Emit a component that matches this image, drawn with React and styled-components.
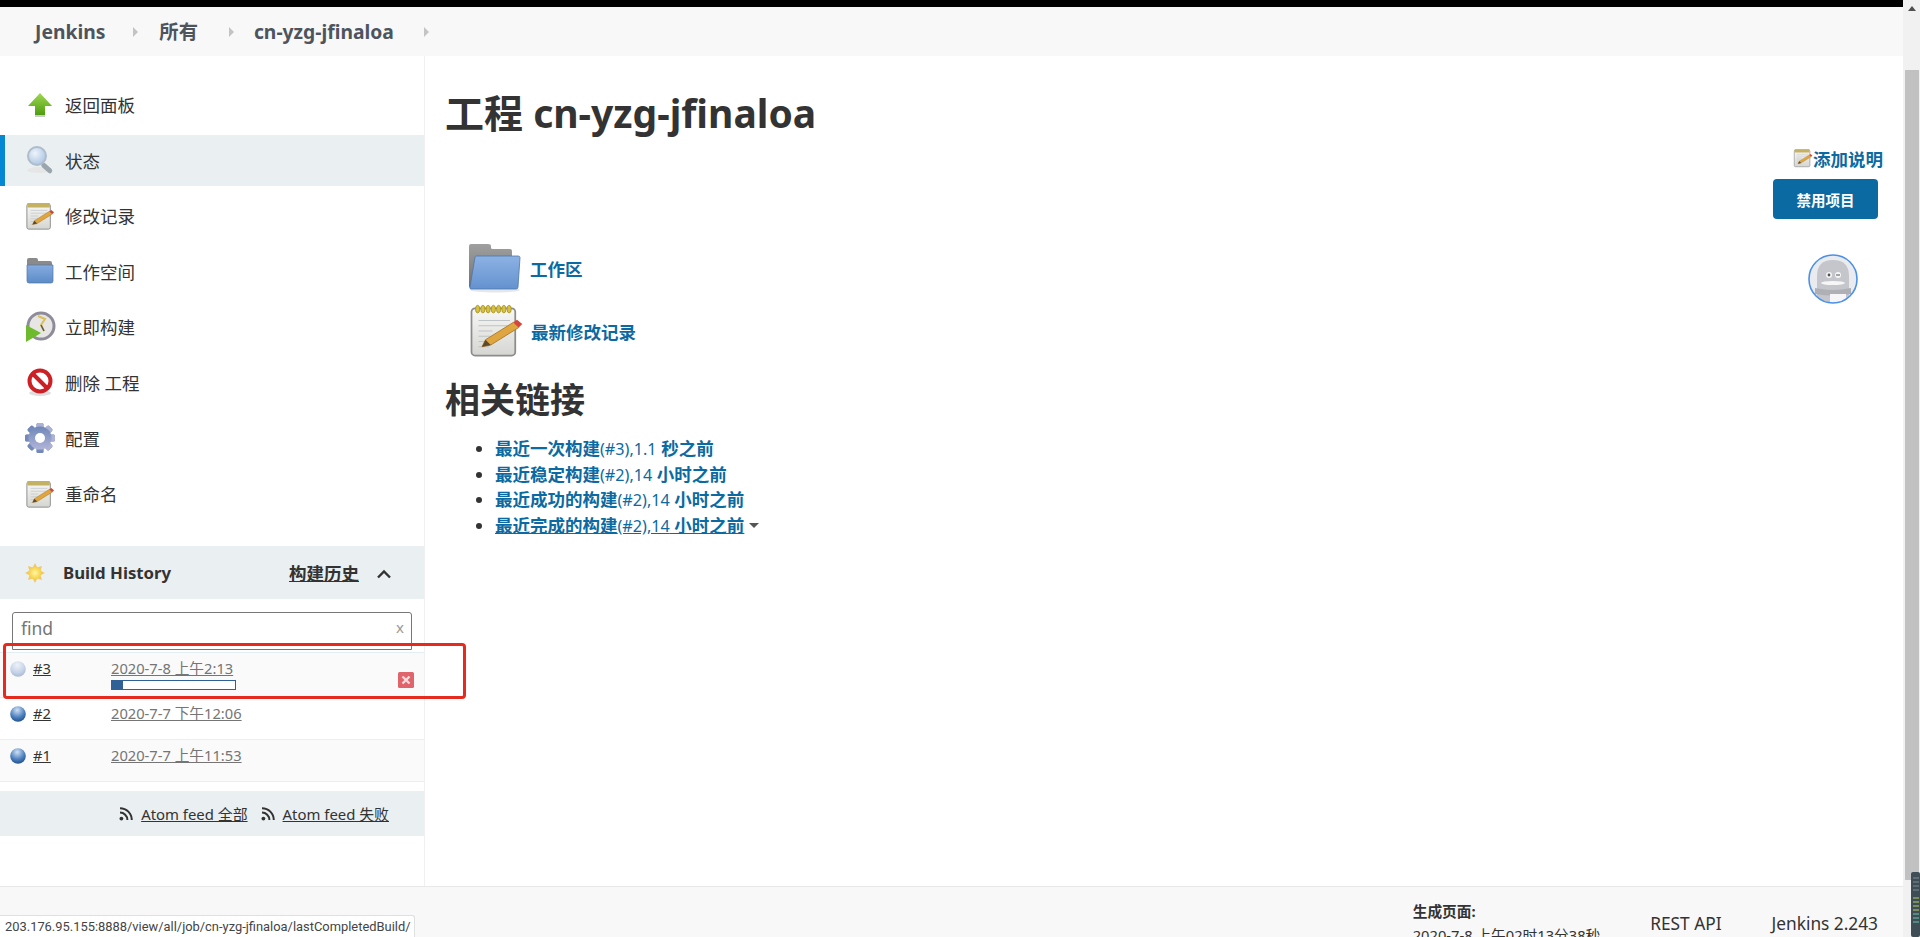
import React from 'react'
import styled, {createGlobalStyle} from 'styled-components'

const FONT = `"Noto Sans", "Noto Sans CJK SC", sans-serif`

const GlobalStyle = createGlobalStyle`
  html, body {
    margin: 0;
    height: 937px;
    overflow: hidden;
    background: #fff;
  }
  body {
    font-family: ${FONT};
    color: #333;
  }
`

const Screen = styled.div`
  position: relative;
  display: flex;
  width: 1920px;
  height: 937px;
  overflow: hidden;
`

const Page = styled.div`
  display: flex;
  flex-direction: column;
  width: 1903px;
  height: 937px;
`

const BlackBar = styled.div`
  flex: none;
  height: 7px;
  background: #000;
`

const Breadcrumbs = styled.nav`
  flex: none;
  display: flex;
  align-items: center;
  height: 49px;
  padding-left: 35px;
  background: #f8f8f8;
  font-size: 19.3px;
  font-weight: 700;
  color: #4d545d;
`

const Crumb = styled.span`
  line-height: 1;
  white-space: nowrap;
`

const CrumbArrow = styled.span`
  width: 0;
  height: 0;
  margin: 0 ${p => p.$right}px 0 ${p => p.$left}px;
  border-left: 5px solid #c4c4c4;
  border-top: 5px solid transparent;
  border-bottom: 5px solid transparent;
`

const Middle = styled.div`
  flex: none;
  display: flex;
  height: 830px;
`

const Sidebar = styled.aside`
  flex: none;
  width: 424px;
  padding-top: 23px;
  border-right: 1px solid #f0f0f0;
`

const Tasks = styled.ul`
  display: flex;
  flex-direction: column;
  gap: 4.6px;
  margin: 0 0 27px;
  padding: 0;
  list-style: none;
`

const Task = styled.li`
  display: flex;
  align-items: center;
  gap: 9px;
  height: 51px;
  padding-left: 24px;
  font-size: 17.5px;
  color: #333;
  background: ${p => (p.$active ? '#eaeff2' : 'transparent')};
  box-shadow: ${p => (p.$active ? 'inset 5px 0 0 #0587d4' : 'none')};
`

const TaskIcon = styled.span`
  display: flex;
  justify-content: center;
  align-items: center;
  width: 32px;
  height: 32px;
`

const PanelHead = styled.div`
  display: flex;
  align-items: center;
  height: 53px;
  padding-left: 25px;
  background: #eaeff2;
`

const PanelTitle = styled.span`
  margin-left: 18px;
  font-size: 16.8px;
  font-weight: 700;
  color: #333;
`

const TrendLink = styled.a`
  margin-left: auto;
  font-size: 17.5px;
  font-weight: 700;
  color: #333;
  text-decoration: underline;
`

const Chevron = styled.svg`
  margin: 2px 32px 0 17px;
`

const Search = styled.div`
  display: flex;
  align-items: center;
  justify-content: space-between;
  height: 29px;
  margin: 13px 12px 2px;
  padding: 0 7px 7px 8px;
  border: 1px solid #777;
  border-radius: 3px 3px 0 0;
  font-size: 17.5px;
  color: #757575;
`

const SearchClear = styled.span`
  margin-top: -2px;
  font-size: 15px;
  color: #999;
`

const Builds = styled.div`
  display: flex;
  flex-direction: column;
`

const Build = styled.div`
  position: relative;
  display: grid;
  grid-template-columns: 23px 78px 1fr;
  height: ${p => p.$height}px;
  padding: 4px 10px 0;
  box-sizing: border-box;
  border-top: ${p => (p.$first ? '1px solid #e4edf2' : 'none')};
  border-bottom: 1px solid #eeeeee;
  background: ${p => (p.$shade ? '#fafafa' : '#fff')};
  font-size: 14.7px;
`

const BallCell = styled.span`
  display: flex;
  height: 24px;
  align-items: center;
`

const BuildNumber = styled.a`
  color: #333;
  line-height: 22px;
  text-decoration: underline;
`

const BuildDate = styled.a`
  color: #757575;
  line-height: 22px;
  text-decoration: underline;
`

const Progress = styled.div`
  width: 125px;
  height: 10px;
  box-sizing: border-box;
  margin-top: 1px;
  border: 1px solid #2f6197;
  background: #fff;
`

const ProgressFill = styled.div`
  height: 100%;
  background: #2f6197;
`

const StopButton = styled.svg`
  position: absolute;
  right: 10px;
  top: 19px;
`

const Highlight = styled.div`
  position: absolute;
  left: 3px;
  top: -10px;
  z-index: 3;
  width: 463px;
  height: 56px;
  box-sizing: border-box;
  border: 3px solid #e52a1e;
  border-radius: 4px;
  pointer-events: none;
`

const Feeds = styled.div`
  display: flex;
  align-items: center;
  justify-content: flex-end;
  height: 45px;
  margin-top: 9px;
  padding-right: 35px;
  background: #eaeff2;
  font-size: 14.9px;
`

const FeedLink = styled.a`
  margin: 0 0 0 8px;
  color: #333;
  text-decoration: underline;
  & + svg {
    margin-left: 13px;
  }
`

const Main = styled.main`
  flex: 1;
  display: flex;
  justify-content: space-between;
  padding: 0 20px;
`

const Content = styled.div`
  display: flex;
  flex-direction: column;
`

const Title = styled.h1`
  margin: 30px 0 0;
  height: 54px;
  font-size: 39px;
  line-height: 54px;
  font-weight: 700;
  color: #333;
  white-space: nowrap;
`

const MainLinks = styled.div`
  display: flex;
  flex-direction: column;
  gap: 10px;
  margin: 103px 0 0 23px;
`

const MainLink = styled.a`
  display: flex;
  align-items: center;
  gap: ${p => p.$gap}px;
  height: ${p => p.$height}px;
  font-size: 17.5px;
  font-weight: 700;
  color: #0b6aa2;
`

const SectionTitle = styled.h2`
  margin: 16px 0 0;
  font-size: 35px;
  line-height: 50px;
  font-weight: 700;
  color: #333;
`

const RelatedList = styled.ul`
  margin: 11px 0 0;
  padding: 0 0 0 50px;
  font-size: 17.5px;
  color: #333;
`

const RelatedItem = styled.li`
  height: 25.7px;
  line-height: 25.7px;
`

const RelatedLink = styled.a`
  font-weight: 700;
  color: #0b6aa2;
  text-decoration: ${p => (p.$hover ? 'underline' : 'none')};
`

const Plain = styled.span`
  font-size: 16.2px;
  font-weight: 400;
`

const Caret = styled.span`
  display: inline-block;
  width: 0;
  height: 0;
  margin-left: 5px;
  vertical-align: 4px;
  border-top: 5px solid #555;
  border-left: 5px solid transparent;
  border-right: 5px solid transparent;
`

const Actions = styled.div`
  display: flex;
  flex-direction: column;
  align-items: flex-end;
  padding-top: 90px;
`

const AddDescription = styled.a`
  display: flex;
  align-items: center;
  height: 24px;
  font-size: 17.5px;
  font-weight: 700;
  color: #0b6aa2;
`

const DisableButton = styled.button`
  width: 105px;
  height: 40px;
  margin: 9px 5px 0 0;
  padding: 0;
  border: 0;
  border-radius: 4px;
  background: #0b6aa2;
  color: #fff;
  font-family: ${FONT};
  font-size: 14.5px;
  font-weight: 700;
`

const Avatar = styled.svg`
  margin: 35px 25px 0 0;
`

const Footer = styled.footer`
  flex: 1;
  display: flex;
  justify-content: flex-end;
  min-height: 0;
  overflow: hidden;
  border-top: 1px solid #e8e8e8;
  background: #f8f8f8;
  color: #333;
`

const Generated = styled.div`
  margin-top: 12px;
  margin-right: 50px;
  font-size: 14.7px;
  line-height: 24px;
  white-space: nowrap;
`

const GeneratedLabel = styled.div`
  font-weight: 700;
`

const FooterLink = styled.a`
  margin: 24px ${p => p.$right}px 0 0;
  font-size: 17.3px;
  line-height: 26px;
  white-space: nowrap;
`

const StatusBubble = styled.div`
  position: absolute;
  left: 0;
  bottom: 0;
  z-index: 4;
  width: 415px;
  height: 22px;
  box-sizing: border-box;
  padding-left: 5px;
  border: 1px solid #e0e0e0;
  border-left: 0;
  border-bottom: 0;
  border-top-right-radius: 3px;
  background: #fff;
  font-family: Roboto, sans-serif;
  font-size: 12.9px;
  line-height: 21px;
  color: #444;
  white-space: nowrap;
`

const Scrollbar = styled.div`
  flex: none;
  display: flex;
  flex-direction: column;
  align-items: center;
  width: 17px;
  height: 937px;
  background: #f1f1f1;
`

const ScrollArrow = styled.span`
  width: 0;
  height: 0;
  margin-top: 6px;
  border-bottom: 5px solid #505050;
  border-left: 4px solid transparent;
  border-right: 4px solid transparent;
`

const ScrollThumb = styled.div`
  width: 14px;
  height: 810px;
  margin-top: 59px;
  background: #c1c1c1;
`

const MeterWidget = styled.svg`
  position: absolute;
  right: 0;
  bottom: 0;
  z-index: 5;
`

function UpArrowIcon() {
  return (
    <svg width="26" height="26" viewBox="0 0 26 26">
      <defs>
        <linearGradient id="arrowGreen" x1="0" y1="0" x2="0" y2="1">
          <stop offset="0" stopColor="#9fd852" />
          <stop offset="1" stopColor="#4b9a0e" />
        </linearGradient>
      </defs>
      <path d="M13 1 L25 14 H18 V24 H8 V14 H1 Z" fill="url(#arrowGreen)" />
      <rect x="8" y="23" width="10" height="2" fill="#ccc" />
    </svg>
  )
}

function SearchIcon() {
  return (
    <svg width="30" height="30" viewBox="0 0 30 30">
      <defs>
        <radialGradient id="lens" cx="0.4" cy="0.35" r="0.7">
          <stop offset="0" stopColor="#eef4fb" />
          <stop offset="1" stopColor="#a9c3e2" />
        </radialGradient>
      </defs>
      <ellipse cx="14" cy="25" rx="12" ry="3" fill="#e6e6e6" />
      <rect x="17" y="17" width="13" height="5" rx="2.5" transform="rotate(42 18 19)" fill="#9aa6ad" />
      <circle cx="12" cy="11" r="9" fill="url(#lens)" stroke="#aebccb" strokeWidth="2" />
    </svg>
  )
}

function NotepadIcon({size = 30, rings}) {
  const ringSpots = [5, 8, 11, 14, 17, 20, 23]
  return (
    <svg width={size} height={size} viewBox="0 0 32 32">
      <defs>
        <linearGradient id="padBody" x1="0" y1="0" x2="0" y2="1">
          <stop offset="0" stopColor="#f8f8f6" />
          <stop offset="1" stopColor="#d5d5d2" />
        </linearGradient>
      </defs>
      <rect x="2" y="3" width="25" height="27" rx="2" fill="url(#padBody)" stroke="#8c8c8c" />
      {rings
        ? ringSpots.map(x => <ellipse key={x} cx={x + 0.5} cy="3.5" rx="1.2" ry="2.2" fill="#d9c13f" stroke="#9b8a20" strokeWidth="0.4" />)
        : <rect x="2.5" y="2" width="24" height="5" rx="1" fill="#c4b262" />}
      <path d="M6 10 H24 M6 13 H24 M6 16 H14 M6 19 H20 M6 22 H14 M6 25 H12" stroke="#bfc4c8" strokeWidth="0.7" />
      <path d="M8 25 L10 21 L26 11 L29 14 L13 24 Z" fill="#dfa63f" stroke="#a9762a" strokeWidth="0.5" />
      <path d="M8 25 L10 21 L13 24 Z" fill="#5c4a2c" />
      <path d="M26 11 L29 14 L31 12 L28 9.5 Z" fill="#d6453a" />
    </svg>
  )
}

function FolderIcon() {
  return (
    <svg width="28" height="28" viewBox="0 0 28 28">
      <defs>
        <linearGradient id="folderBlue" x1="0" y1="0" x2="0" y2="1">
          <stop offset="0" stopColor="#86ace0" />
          <stop offset="1" stopColor="#5c8bc7" />
        </linearGradient>
      </defs>
      <path d="M1 3 Q1 1 3 1 H10 Q12 1 12 3 V4 H24 Q26 4 26 6 V10 H1 Z" fill="#8a8a8a" />
      <path d="M1 8 H27 V24 Q27 26 25 26 H3 Q1 26 1 24 Z" fill="url(#folderBlue)" stroke="#4d76a8" strokeWidth="0.7" />
    </svg>
  )
}

function OpenFolderIcon() {
  return (
    <svg width="56" height="50" viewBox="0 0 56 50">
      <defs>
        <linearGradient id="folderOpen" x1="0" y1="0" x2="0" y2="1">
          <stop offset="0" stopColor="#8db2e4" />
          <stop offset="1" stopColor="#6492cf" />
        </linearGradient>
        <linearGradient id="folderBack" x1="0" y1="0" x2="0" y2="1">
          <stop offset="0" stopColor="#a0a0a0" />
          <stop offset="1" stopColor="#707070" />
        </linearGradient>
      </defs>
      <ellipse cx="27" cy="47" rx="25" ry="2.5" fill="#e4e8ee" />
      <path d="M1 3 Q1 1 3 1 H20 Q23 1 23 3 V5 Q23 6 25 6 H42 Q44 6 44 8 V20 L6 45 H3 Q1 45 1 43 Z" fill="url(#folderBack)" />
      <path d="M7 14 Q7 13 8.5 13 H50 Q52 13 52 14.5 L50 44 Q50 46 48 46 H3 Q1.5 46 2 44 Z" fill="url(#folderOpen)" stroke="#4d76a8" strokeWidth="0.8" />
    </svg>
  )
}

function BuildNowIcon() {
  return (
    <svg width="32" height="32" viewBox="0 0 32 32">
      <circle cx="17" cy="15" r="13" fill="#e8e6e4" stroke="#8e8c9a" strokeWidth="3" />
      <path d="M14 5 L21 8 L17 14 L20 20" fill="none" stroke="#d8c05c" strokeWidth="2" />
      <path d="M17 14 L20 20" stroke="#555" strokeWidth="1.4" />
      <path d="M2 31 L2 14 L17 22 Z" fill="#6dbb2d" />
    </svg>
  )
}

function DeleteIcon() {
  return (
    <svg width="28" height="28" viewBox="0 0 28 28">
      <ellipse cx="14" cy="25" rx="11" ry="3" fill="#dedede" />
      <circle cx="14" cy="13" r="10.5" fill="#fff" stroke="#cc2025" strokeWidth="4" />
      <path d="M6.5 5.5 L21.5 20.5" stroke="#cc2025" strokeWidth="4" />
    </svg>
  )
}

function GearIcon() {
  const teeth = [0, 45, 90, 135, 180, 225, 270, 315]
  return (
    <svg width="32" height="32" viewBox="0 0 32 32">
      <defs>
        <linearGradient id="gearBlue" x1="0" y1="0" x2="0" y2="1">
          <stop offset="0" stopColor="#6f87b8" />
          <stop offset="1" stopColor="#b1b4d8" />
        </linearGradient>
      </defs>
      <g fill="url(#gearBlue)">
        {teeth.map(a => (
          <rect key={a} x="12.5" y="1" width="7" height="30" rx="1.5" transform={`rotate(${a} 16 16)`} />
        ))}
        <circle cx="16" cy="16" r="11.5" />
      </g>
      <circle cx="16" cy="16" r="5" fill="#fff" />
    </svg>
  )
}

function SunIcon() {
  const rays = [0, 45, 90, 135, 180, 225, 270, 315]
  return (
    <svg width="20" height="20" viewBox="0 0 20 20">
      <defs>
        <radialGradient id="sunCore">
          <stop offset="0" stopColor="#fff6a8" />
          <stop offset="1" stopColor="#f5cf3e" />
        </radialGradient>
      </defs>
      {rays.map(a => (
        <path key={a} d="M10 0 L12 4 H8 Z" fill="#f2c76b" transform={`rotate(${a} 10 10)`} />
      ))}
      <circle cx="10" cy="10" r="6.5" fill="url(#sunCore)" />
    </svg>
  )
}

function BallIcon({pending}) {
  const id = pending ? 'ballPending' : 'ballDone'
  return (
    <svg width="16" height="16" viewBox="0 0 16 16">
      <defs>
        <radialGradient id={id} cx="0.45" cy="0.25" r="0.8">
          <stop offset="0" stopColor={pending ? '#eef2f8' : '#cfe0f4'} />
          <stop offset="0.6" stopColor={pending ? '#c6d4e8' : '#4a7ebd'} />
          <stop offset="1" stopColor={pending ? '#a4b5cf' : '#1d4a86'} />
        </radialGradient>
      </defs>
      <circle cx="8" cy="8" r="7.8" fill={`url(#${id})`} />
    </svg>
  )
}

function RssIcon() {
  return (
    <svg width="14" height="14" viewBox="0 0 14 14">
      <circle cx="2.4" cy="11.6" r="1.9" fill="#333" />
      <path d="M1 5.6 A7.4 7.4 0 0 1 8.4 13" fill="none" stroke="#333" strokeWidth="2" />
      <path d="M1 1.2 A11.8 11.8 0 0 1 12.8 13" fill="none" stroke="#333" strokeWidth="2" />
    </svg>
  )
}

function RobotAvatar() {
  return (
    <Avatar width="50" height="50" viewBox="0 0 50 50">
      <defs>
        <clipPath id="avatarClip">
          <circle cx="25" cy="25" r="23.5" />
        </clipPath>
      </defs>
      <circle cx="25" cy="25" r="23.5" fill="#e9ebef" />
      <g clipPath="url(#avatarClip)">
        <path d="M9 50 V22 Q9 6 25 6 Q41 6 41 22 V50 Z" fill="#c4c6cb" />
        <ellipse cx="25" cy="29" rx="12" ry="2" fill="#f6f6f6" />
        <path d="M7 34 Q25 38 43 34 V40 Q25 43 7 40 Z" fill="#aeb0b6" />
        <rect x="22" y="40" width="16" height="10" fill="#f6f6f8" />
        <circle cx="21" cy="21" r="3" fill="#f6f6f6" />
        <circle cx="30" cy="21" r="3" fill="#f6f6f6" />
        <circle cx="21" cy="21" r="1.4" fill="#555" />
        <path d="M28 21 H32" stroke="#555" strokeWidth="1.2" />
      </g>
      <circle cx="25" cy="25" r="24" fill="none" stroke="#4a8fe8" strokeWidth="1.6" />
    </Avatar>
  )
}

const tasks = [
  {label: '返回面板', icon: <UpArrowIcon />},
  {label: '状态', icon: <SearchIcon />, active: true},
  {label: '修改记录', icon: <NotepadIcon />},
  {label: '工作空间', icon: <FolderIcon />},
  {label: '立即构建', icon: <BuildNowIcon />},
  {label: '删除 工程', icon: <DeleteIcon />},
  {label: '配置', icon: <GearIcon />},
  {label: '重命名', icon: <NotepadIcon />}
]

const related = [
  {name: '最近一次构建', num: '(#3),1.1', ago: ' 秒之前'},
  {name: '最近稳定构建', num: '(#2),14', ago: ' 小时之前'},
  {name: '最近成功的构建', num: '(#2),14', ago: ' 小时之前'},
  {name: '最近完成的构建', num: '(#2),14', ago: ' 小时之前', hover: true}
]

export default function App() {
  return (
    <Screen>
      <GlobalStyle />
      <Page>
        <BlackBar />
        <Breadcrumbs>
          <Crumb>Jenkins</Crumb>
          <CrumbArrow $left={28} $right={21} />
          <Crumb>所有</Crumb>
          <CrumbArrow $left={31} $right={20} />
          <Crumb>cn-yzg-jfinaloa</Crumb>
          <CrumbArrow $left={30} $right={0} />
        </Breadcrumbs>
        <Middle>
          <Sidebar>
            <Tasks>
              {tasks.map(t => (
                <Task key={t.label} $active={t.active}>
                  <TaskIcon>{t.icon}</TaskIcon>
                  {t.label}
                </Task>
              ))}
            </Tasks>
            <PanelHead>
              <SunIcon />
              <PanelTitle>Build History</PanelTitle>
              <TrendLink>构建历史</TrendLink>
              <Chevron width="16" height="10" viewBox="0 0 16 10">
                <path d="M2 8.5 L8 2.5 L14 8.5" fill="none" stroke="#333" strokeWidth="2.4" />
              </Chevron>
            </PanelHead>
            <Search>
              find
              <SearchClear>x</SearchClear>
            </Search>
            <Builds>
              <Build $first $shade $height={46}>
                <BallCell><BallIcon pending /></BallCell>
                <BuildNumber>#3</BuildNumber>
                <div>
                  <BuildDate>2020-7-8 上午2:13</BuildDate>
                  <Progress>
                    <ProgressFill style={{width: '9%'}} />
                  </Progress>
                </div>
                <StopButton width="16" height="16" viewBox="0 0 16 16">
                  <rect width="16" height="16" rx="1.5" fill="#e0646c" />
                  <path d="M4.5 4.5 L11.5 11.5 M11.5 4.5 L4.5 11.5" stroke="#fbdcdc" strokeWidth="2.4" />
                </StopButton>
                <Highlight />
              </Build>
              <Build $height={42}>
                <BallCell><BallIcon /></BallCell>
                <BuildNumber>#2</BuildNumber>
                <BuildDate>2020-7-7 下午12:06</BuildDate>
              </Build>
              <Build $shade $height={42}>
                <BallCell><BallIcon /></BallCell>
                <BuildNumber>#1</BuildNumber>
                <BuildDate>2020-7-7 上午11:53</BuildDate>
              </Build>
            </Builds>
            <Feeds>
              <RssIcon />
              <FeedLink>Atom feed 全部</FeedLink>
              <RssIcon />
              <FeedLink>Atom feed 失败</FeedLink>
            </Feeds>
          </Sidebar>
          <Main>
            <Content>
              <Title>工程 cn-yzg-jfinaloa</Title>
              <MainLinks>
                <MainLink $height={50} $gap={6}>
                  <OpenFolderIcon />
                  工作区
                </MainLink>
                <MainLink $height={56} $gap={7}>
                  <NotepadIcon size={56} rings />
                  最新修改记录
                </MainLink>
              </MainLinks>
              <SectionTitle>相关链接</SectionTitle>
              <RelatedList>
                {related.map(r => (
                  <RelatedItem key={r.name}>
                    <RelatedLink $hover={r.hover}>
                      {r.name}
                      <Plain>{r.num}</Plain>
                      {r.ago}
                    </RelatedLink>
                    {r.hover && <Caret />}
                  </RelatedItem>
                ))}
              </RelatedList>
            </Content>
            <Actions>
              <AddDescription>
                <NotepadIcon size={20} />
                添加说明
              </AddDescription>
              <DisableButton>禁用项目</DisableButton>
              <RobotAvatar />
            </Actions>
          </Main>
        </Middle>
        <Footer>
          <Generated>
            <GeneratedLabel>生成页面:</GeneratedLabel>
            <div>2020-7-8 上午02时13分38秒</div>
          </Generated>
          <FooterLink $right={50}>REST API</FooterLink>
          <FooterLink $right={25}>Jenkins 2.243</FooterLink>
        </Footer>
      </Page>
      <Scrollbar>
        <ScrollArrow />
        <ScrollThumb />
      </Scrollbar>
      <StatusBubble>203.176.95.155:8888/view/all/job/cn-yzg-jfinaloa/lastCompletedBuild/</StatusBubble>
      <MeterWidget width="9" height="65" viewBox="0 0 9 65">
        <rect width="9" height="65" rx="2" fill="#3f4d56" />
        <path d="M2 6 H8 M2 10 H8 M2 14 H8 M2 18 H8" stroke="#7f8d96" />
        <path d="M2 26 H8 M2 30 H8 M2 34 H8 M2 38 H8" stroke="#b9cf6a" />
        <path d="M2 42 H8 M2 46 H8 M2 50 H8" stroke="#6ac7a8" />
      </MeterWidget>
    </Screen>
  )
}
